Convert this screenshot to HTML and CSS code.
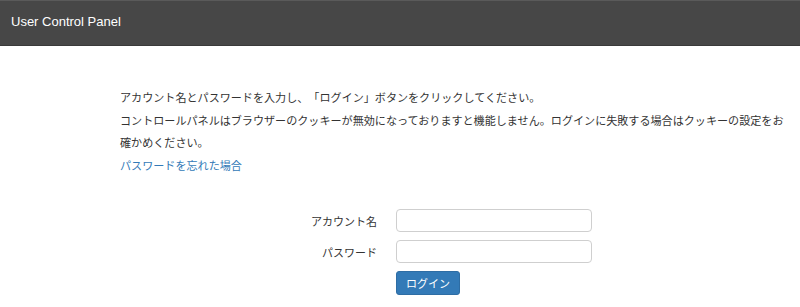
FILE: index.html
```html
<!DOCTYPE html>
<html lang="ja">
<head>
<meta charset="utf-8">
<title>User Control Panel</title>
<link rel="stylesheet" href="styles.css">
</head>
<body>
<header class="topbar">
  <span class="brand">User Control Panel</span>
</header>
<main class="content">
  <div class="intro">
    <p class="line">アカウント名とパスワードを入力し、「ログイン」ボタンをクリックしてください。</p>
    <p class="line">コントロールパネルはブラウザーのクッキーが無効になっておりますと機能しません。ログインに失敗する場合はクッキーの設定をお確かめください。</p>
    <a class="forgot" href="#">パスワードを忘れた場合</a>
  </div>
  <form class="login">
    <label class="label" for="acc">アカウント名</label>
    <input class="field" id="acc" type="text">
    <label class="label" for="pw">パスワード</label>
    <input class="field" id="pw" type="password">
    <span></span>
    <div><button class="btn" type="button">ログイン</button></div>
  </form>
</main>
</body>
</html>
```

FILE: styles.css
```css
html, body {
  margin: 0;
  padding: 0;
  background: #fff;
}
body {
  font-family: "Noto Sans CJK JP", "Liberation Sans", sans-serif;
  font-size: 11px;
  color: #333;
  text-spacing-trim: space-all;
}
.topbar {
  height: 46px;
  background: #474747;
  border-top: 1px solid #5a5a5a;
  border-bottom: 1px solid #3a3a3a;
  box-sizing: border-box;
  display: flex;
  align-items: center;
  padding: 0 0 4px 11px;
}
.brand {
  font-family: "Liberation Sans", Arial, sans-serif;
  font-size: 13px;
  color: #fff;
}
.content {
  padding: 40px 0 0 120px;
}
.intro {
  width: 672px;
  line-height: 22.5px;
}
.line {
  margin: 0;
  font-size: 11.08px;
}
.forgot {
  color: #337ab7;
  text-decoration: none;
  font-size: 11.08px;
}
.login {
  margin-top: 33px;
  display: grid;
  grid-template-columns: 258px 196px;
  column-gap: 18px;
  row-gap: 8px;
  align-items: center;
}
.label {
  text-align: right;
  padding-right: 1px;
}
.field {
  box-sizing: border-box;
  height: 23px;
  width: 196px;
  border: 1px solid #cfcfcf;
  border-radius: 4px;
  margin: 0;
  padding: 2px 6px;
  font: inherit;
}
.btn {
  box-sizing: border-box;
  height: 24px;
  width: 64px;
  background: #337ab7;
  border: 1px solid #2e6da4;
  border-radius: 3px;
  color: #fff;
  font: inherit;
  font-size: 11px;
  padding: 0;
  cursor: pointer;
}
```
